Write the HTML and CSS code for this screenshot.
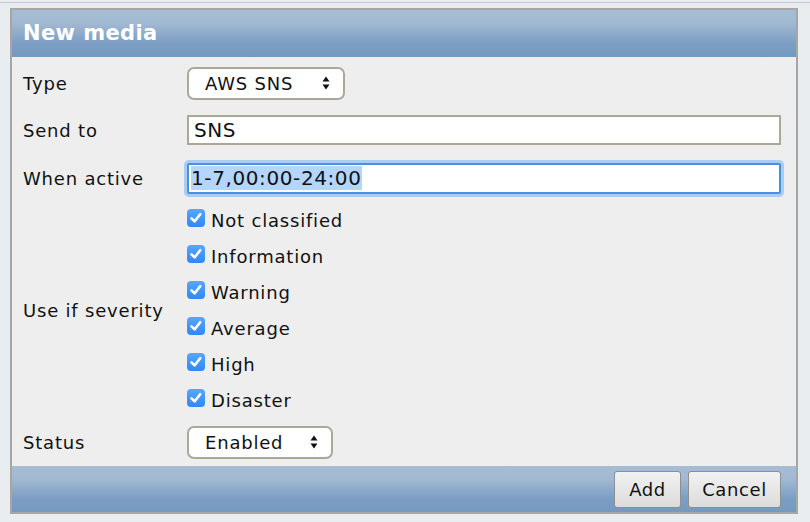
FILE: index.html
```html
<!DOCTYPE html>
<html>
<head>
<meta charset="utf-8">
<link rel="stylesheet" href="styles.css">
</head>
<body>
<div class="topline"></div>
<div class="dialog">
  <div class="header">New media</div>
  <div class="form">
    <div class="row r-type">
      <div class="label">Type</div>
      <div class="select w-type"><span>AWS SNS</span><svg class="arrows" width="8" height="14" viewBox="0 0 8 14"><path d="M4 0.5 L7.5 5.5 L0.5 5.5 Z M4 13.5 L7.5 8.5 L0.5 8.5 Z" fill="#111"/></svg></div>
    </div>
    <div class="row r-send">
      <div class="label">Send to</div>
      <div class="input">SNS</div>
    </div>
    <div class="row r-when">
      <div class="label">When active</div>
      <div class="input focus"><span class="sel">1-7,00:00-24:00</span></div>
    </div>
    <div class="row r-sev">
      <div class="label">Use if severity</div>
      <div class="checks">
        <div class="check"><span class="box"><svg width="18" height="18" viewBox="0 0 18 18"><path d="M4.5 9.3 L7.6 12.4 L13.2 5.2" stroke="#fff" stroke-width="2.6" fill="none" stroke-linecap="round" stroke-linejoin="round"/></svg></span>Not classified</div>
        <div class="check"><span class="box"><svg width="18" height="18" viewBox="0 0 18 18"><path d="M4.5 9.3 L7.6 12.4 L13.2 5.2" stroke="#fff" stroke-width="2.6" fill="none" stroke-linecap="round" stroke-linejoin="round"/></svg></span>Information</div>
        <div class="check"><span class="box"><svg width="18" height="18" viewBox="0 0 18 18"><path d="M4.5 9.3 L7.6 12.4 L13.2 5.2" stroke="#fff" stroke-width="2.6" fill="none" stroke-linecap="round" stroke-linejoin="round"/></svg></span>Warning</div>
        <div class="check"><span class="box"><svg width="18" height="18" viewBox="0 0 18 18"><path d="M4.5 9.3 L7.6 12.4 L13.2 5.2" stroke="#fff" stroke-width="2.6" fill="none" stroke-linecap="round" stroke-linejoin="round"/></svg></span>Average</div>
        <div class="check"><span class="box"><svg width="18" height="18" viewBox="0 0 18 18"><path d="M4.5 9.3 L7.6 12.4 L13.2 5.2" stroke="#fff" stroke-width="2.6" fill="none" stroke-linecap="round" stroke-linejoin="round"/></svg></span>High</div>
        <div class="check"><span class="box"><svg width="18" height="18" viewBox="0 0 18 18"><path d="M4.5 9.3 L7.6 12.4 L13.2 5.2" stroke="#fff" stroke-width="2.6" fill="none" stroke-linecap="round" stroke-linejoin="round"/></svg></span>Disaster</div>
      </div>
    </div>
    <div class="row r-status">
      <div class="label">Status</div>
      <div class="select w-status"><span>Enabled</span><svg class="arrows" width="8" height="14" viewBox="0 0 8 14"><path d="M4 0.5 L7.5 5.5 L0.5 5.5 Z M4 13.5 L7.5 8.5 L0.5 8.5 Z" fill="#111"/></svg></div>
    </div>
  </div>
  <div class="footer">
    <button class="btn btn-add">Add</button>
    <button class="btn btn-cancel">Cancel</button>
  </div>
</div>
</body>
</html>
```
FILE: styles.css
```css
html, body {
  margin: 0;
  padding: 0;
}
body {
  background: #e9edf0;
  font-family: "DejaVu Sans", Verdana, sans-serif;
  font-size: 18px;
  letter-spacing: 0.8px;
  color: #111;
  width: 810px;
  height: 522px;
  overflow: hidden;
}
.topline {
  height: 1px;
  margin-top: 2px;
  background: #c3c6d6;
}
.dialog {
  margin: 5px 0 0 10px;
  width: 784px;
  border: 2px solid #a6a6a6;
  background: #eeeeee;
}
.header {
  height: 47px;
  box-sizing: border-box;
  padding: 11px 0 0 11px;
  background: linear-gradient(#a5bcd4 0%, #a2b9d2 28%, #7b9dc3 72%, #769abf 100%);
  color: #fff;
  font-weight: bold;
  font-size: 21px;
  letter-spacing: 0.4px;
  line-height: 24px;
}
.form {
  padding: 8px 15px 6px 11px;
}
.row {
  display: flex;
  align-items: center;
  min-height: 36px;
}
.label {
  width: 164px;
  flex: none;
}
.r-send { margin-top: 11px; }
.r-when { margin-top: 12px; }
.r-sev { margin-top: 6px; }
.r-status { margin-top: 6px; }

.select {
  box-sizing: border-box;
  height: 33px;
  border: 2px solid #aca899;
  border-radius: 7px;
  background: #fff;
  display: flex;
  align-items: center;
  padding: 0 13px 0 16px;
}
.select span { flex: 1; }
.w-type { width: 158px; }
.w-status { width: 146px; }
.arrows { flex: none; }

.input {
  box-sizing: border-box;
  flex: 1;
  height: 30px;
  border: 2px solid #aca899;
  background: #fff;
  padding: 0 0 0 5px;
  font-size: 20px;
  letter-spacing: 0.6px;
  line-height: 26px;
}
.input.focus {
  height: 31px;
  border: 2px solid #4a90dc;
  border-radius: 2px;
  box-shadow: 0 0 0 3px #a9cdf5;
  padding-left: 2px;
}
.sel {
  background: #b4d5fd;
}

.checks {
  display: flex;
  flex-direction: column;
}
.check {
  height: 36px;
  display: flex;
  align-items: center;
}
.box {
  width: 18px;
  height: 18px;
  border-radius: 4px;
  background: linear-gradient(#5aa6fb, #2f88f2);
  margin-right: 6px;
  margin-top: -4px;
  display: block;
}
.box svg { display: block; }

.footer {
  height: 46px;
  background: linear-gradient(#a5bcd4 0%, #a2b9d2 28%, #7b9dc3 72%, #769abf 100%);
  display: flex;
  justify-content: flex-end;
  align-items: center;
  gap: 7px;
  padding-right: 15px;
}
.btn {
  font-family: "DejaVu Sans", Verdana, sans-serif;
  font-size: 18px;
  letter-spacing: 0.6px;
  color: #111;
  height: 37px;
  border: 1px solid #8e8e8e;
  border-radius: 3px;
  background: linear-gradient(#f2f2f2, #dcdcdc);
  padding: 0;
  margin: 0;
}
.btn-add { width: 67px; }
.btn-cancel { width: 93px; }
```
